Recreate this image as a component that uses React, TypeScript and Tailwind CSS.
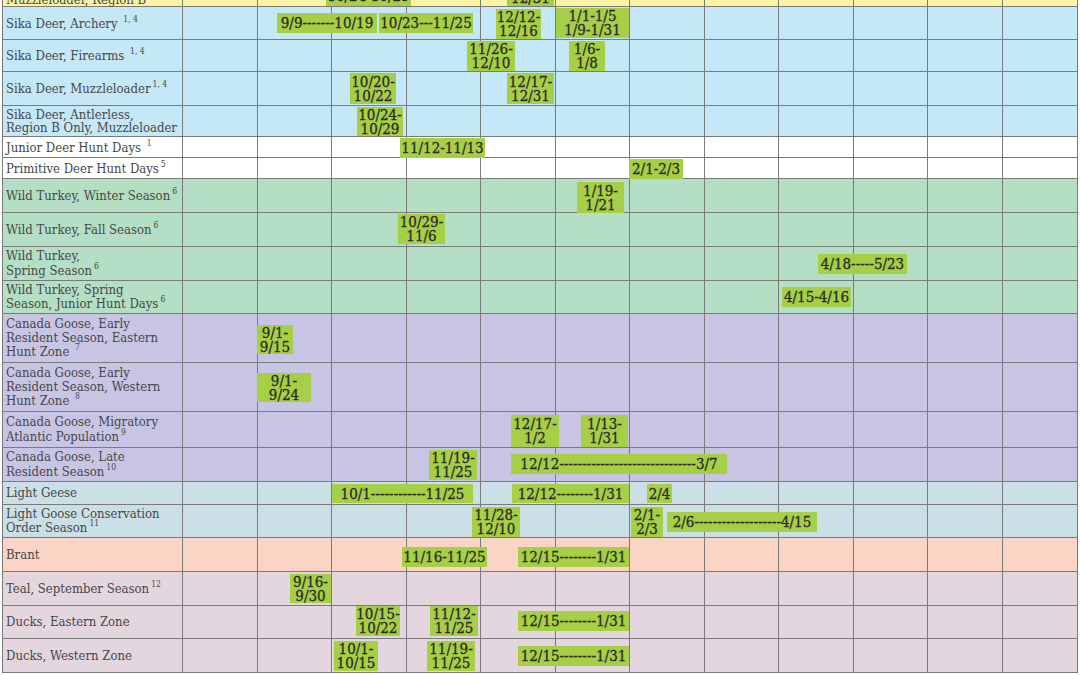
import React from "react";

type B = [number, number, number, number, string[]];
type R = {
  top: number;
  h: string;
  bg: string;
  label: React.ReactNode;
  badges: B[];
  bottom?: boolean;
};

const Sup = ({ children }: { children: React.ReactNode }) => (
  <sup className="text-[8.5px] leading-none relative -top-[1px] ml-[2px] align-super">{children}</sup>
);

const BLUE = "bg-[#c5e8f7]";
const GREEN = "bg-[#b4dfc4]";
const PURPLE = "bg-[#c8c5e4]";
const GEESE = "bg-[#cbdfe6]";
const SALMON = "bg-[#fad5c5]";
const MAUVE = "bg-[#e3d6de]";
const WHITE = "bg-white";

const rows: R[] = [
  {
    top: -26,
    h: "h-[33px]",
    bg: "bg-[#fdf3a7]",
    bottom: true,
    label: <>Muzzleloader, Region B</>,
    badges: [
      [326, 411, -14, 6, ["10/24-10/29"]],
      [507, 554, -24, 6, ["12/17-", "12/31"]],
    ],
  },
  {
    top: 7,
    h: "h-[33px]",
    bg: BLUE,
    label: (
      <>
        Sika Deer, Archery <Sup>1, 4</Sup>
      </>
    ),
    badges: [
      [277, 377, 13, 33, ["9/9-------10/19"]],
      [379, 473, 13, 33, ["10/23---11/25"]],
      [496, 541, 9, 39, ["12/12-", "12/16"]],
      [556, 629, 8, 38, ["1/1-1/5", "1/9-1/31"]],
    ],
  },
  {
    top: 40,
    h: "h-[32px]",
    bg: BLUE,
    label: (
      <>
        Sika Deer, Firearms <Sup>1, 4</Sup>
      </>
    ),
    badges: [
      [467, 515, 41, 71, ["11/26-", "12/10"]],
      [569, 605, 41, 71, ["1/6-", "1/8"]],
    ],
  },
  {
    top: 72,
    h: "h-[34px]",
    bg: BLUE,
    label: (
      <>
        Sika Deer, Muzzleloader<Sup>1, 4</Sup>
      </>
    ),
    badges: [
      [350, 396, 73, 104, ["10/20-", "10/22"]],
      [507, 554, 73, 104, ["12/17-", "12/31"]],
    ],
  },
  {
    top: 106,
    h: "h-[31px]",
    bg: BLUE,
    label: (
      <>
        Sika Deer, Antlerless,
        <br />
        Region B Only, Muzzleloader
      </>
    ),
    badges: [[357, 403, 107, 136, ["10/24-", "10/29"]]],
  },
  {
    top: 137,
    h: "h-[21px]",
    bg: WHITE,
    label: (
      <>
        Junior Deer Hunt Days <Sup>1</Sup>
      </>
    ),
    badges: [[400, 485, 138, 158, ["11/12-11/13"]]],
  },
  {
    top: 158,
    h: "h-[21px]",
    bg: WHITE,
    label: (
      <>
        Primitive Deer Hunt Days<Sup>5</Sup>
      </>
    ),
    badges: [[629, 683, 159, 179, ["2/1-2/3"]]],
  },
  {
    top: 179,
    h: "h-[34px]",
    bg: GREEN,
    label: (
      <>
        Wild Turkey, Winter Season<Sup>6</Sup>
      </>
    ),
    badges: [[577, 624, 182, 213, ["1/19-", "1/21"]]],
  },
  {
    top: 213,
    h: "h-[34px]",
    bg: GREEN,
    label: (
      <>
        Wild Turkey, Fall Season<Sup>6</Sup>
      </>
    ),
    badges: [[398, 445, 214, 244, ["10/29-", "11/6"]]],
  },
  {
    top: 247,
    h: "h-[34px]",
    bg: GREEN,
    label: (
      <>
        Wild Turkey,
        <br />
        Spring Season<Sup>6</Sup>
      </>
    ),
    badges: [[818, 907, 254, 274, ["4/18-----5/23"]]],
  },
  {
    top: 281,
    h: "h-[33px]",
    bg: GREEN,
    label: (
      <>
        Wild Turkey, Spring
        <br />
        Season, Junior Hunt Days<Sup>6</Sup>
      </>
    ),
    badges: [[782, 851, 287, 307, ["4/15-4/16"]]],
  },
  {
    top: 314,
    h: "h-[49px]",
    bg: PURPLE,
    label: (
      <>
        Canada Goose, Early
        <br />
        Resident Season, Eastern
        <br />
        Hunt Zone <Sup>7</Sup>
      </>
    ),
    badges: [[257, 293, 325, 354, ["9/1-", "9/15"]]],
  },
  {
    top: 363,
    h: "h-[49px]",
    bg: PURPLE,
    label: (
      <>
        Canada Goose, Early
        <br />
        Resident Season, Western
        <br />
        Hunt Zone <Sup>8</Sup>
      </>
    ),
    badges: [[257, 311, 373, 402, ["9/1-", "9/24"]]],
  },
  {
    top: 412,
    h: "h-[36px]",
    bg: PURPLE,
    label: (
      <>
        Canada Goose, Migratory
        <br />
        Atlantic Population<Sup>9</Sup>
      </>
    ),
    badges: [
      [511, 559, 415, 447, ["12/17-", "1/2"]],
      [581, 628, 415, 447, ["1/13-", "1/31"]],
    ],
  },
  {
    top: 448,
    h: "h-[34px]",
    bg: PURPLE,
    label: (
      <>
        Canada Goose, Late
        <br />
        Resident Season<Sup>10</Sup>
      </>
    ),
    badges: [
      [429, 477, 450, 480, ["11/19-", "11/25"]],
      [511, 727, 454, 474, ["12/12------------------------------3/7"]],
    ],
  },
  {
    top: 482,
    h: "h-[23px]",
    bg: GEESE,
    label: <>Light Geese</>,
    badges: [
      [332, 473, 484, 503, ["10/1------------11/25"]],
      [512, 629, 484, 503, ["12/12--------1/31"]],
      [647, 672, 484, 503, ["2/4"]],
    ],
  },
  {
    top: 505,
    h: "h-[33px]",
    bg: GEESE,
    label: (
      <>
        Light Goose Conservation
        <br />
        Order Season<Sup>11</Sup>
      </>
    ),
    badges: [
      [472, 520, 507, 537, ["11/28-", "12/10"]],
      [631, 663, 507, 537, ["2/1-", "2/3"]],
      [667, 817, 512, 532, ["2/6-------------------4/15"]],
    ],
  },
  {
    top: 538,
    h: "h-[34px]",
    bg: SALMON,
    label: <>Brant</>,
    badges: [
      [402, 487, 547, 567, ["11/16-11/25"]],
      [518, 629, 547, 567, ["12/15--------1/31"]],
    ],
  },
  {
    top: 572,
    h: "h-[34px]",
    bg: MAUVE,
    label: (
      <>
        Teal, September Season<Sup>12</Sup>
      </>
    ),
    badges: [[290, 331, 574, 603, ["9/16-", "9/30"]]],
  },
  {
    top: 606,
    h: "h-[33px]",
    bg: MAUVE,
    label: <>Ducks, Eastern Zone</>,
    badges: [
      [356, 400, 606, 636, ["10/15-", "10/22"]],
      [430, 478, 606, 636, ["11/12-", "11/25"]],
      [518, 629, 611, 631, ["12/15--------1/31"]],
    ],
  },
  {
    top: 639,
    h: "h-[34px]",
    bg: MAUVE,
    label: <>Ducks, Western Zone</>,
    badges: [
      [334, 378, 641, 671, ["10/1-", "10/15"]],
      [427, 475, 641, 671, ["11/19-", "11/25"]],
      [518, 629, 646, 666, ["12/15--------1/31"]],
    ],
  },
];

const ORIGIN_X = 183;
const months = Array.from({ length: 12 }, (_, i) => i);

function Badge({ b, rowTop }: { b: B; rowTop: number }) {
  const [x1, x2, y1, y2, lines] = b;
  return (
    <div
      className="absolute z-10 flex flex-col items-center justify-center bg-[#a7cf45] text-[#2b2b2b] text-[15px] leading-[14px] whitespace-nowrap overflow-hidden [-webkit-text-stroke:0.3px_#2b2b2b]"
      style={{ left: x1 - ORIGIN_X, top: y1 - rowTop, width: x2 - x1, height: y2 - y1 }}
    >
      {lines.map((l, i) => (
        <span key={i}>{l}</span>
      ))}
    </div>
  );
}

export default function App() {
  return (
    <div className="w-[1080px] h-[675px] overflow-hidden bg-white font-['DejaVu_Serif_Condensed','DejaVu_Serif',serif] [font-stretch:condensed]">
      <div className="ml-[2px] w-[1076px] -mt-[26px] border-l border-r border-[#7a7a7a]">
        {rows.map((r, i) => (
          <div key={i} className={`flex border-b border-[#7a7a7a] ${r.h} ${r.bg}`}>
            <div
              className={`w-[180px] shrink-0 border-r border-[#7a7a7a] pl-[3px] flex text-[13px] leading-[13.5px] text-[#474747] ${
                r.bottom ? "items-end" : "items-center"
              }`}
            >
              <div>{r.label}</div>
            </div>
            <div className="relative flex-1">
              <div className="absolute inset-0 grid grid-cols-12">
                {months.map((m) => (
                  <div key={m} className={m < 11 ? "border-r border-[#7a7a7a]" : ""} />
                ))}
              </div>
              {r.badges.map((b, j) => (
                <Badge key={j} b={b} rowTop={r.top} />
              ))}
            </div>
          </div>
        ))}
      </div>
    </div>
  );
}
